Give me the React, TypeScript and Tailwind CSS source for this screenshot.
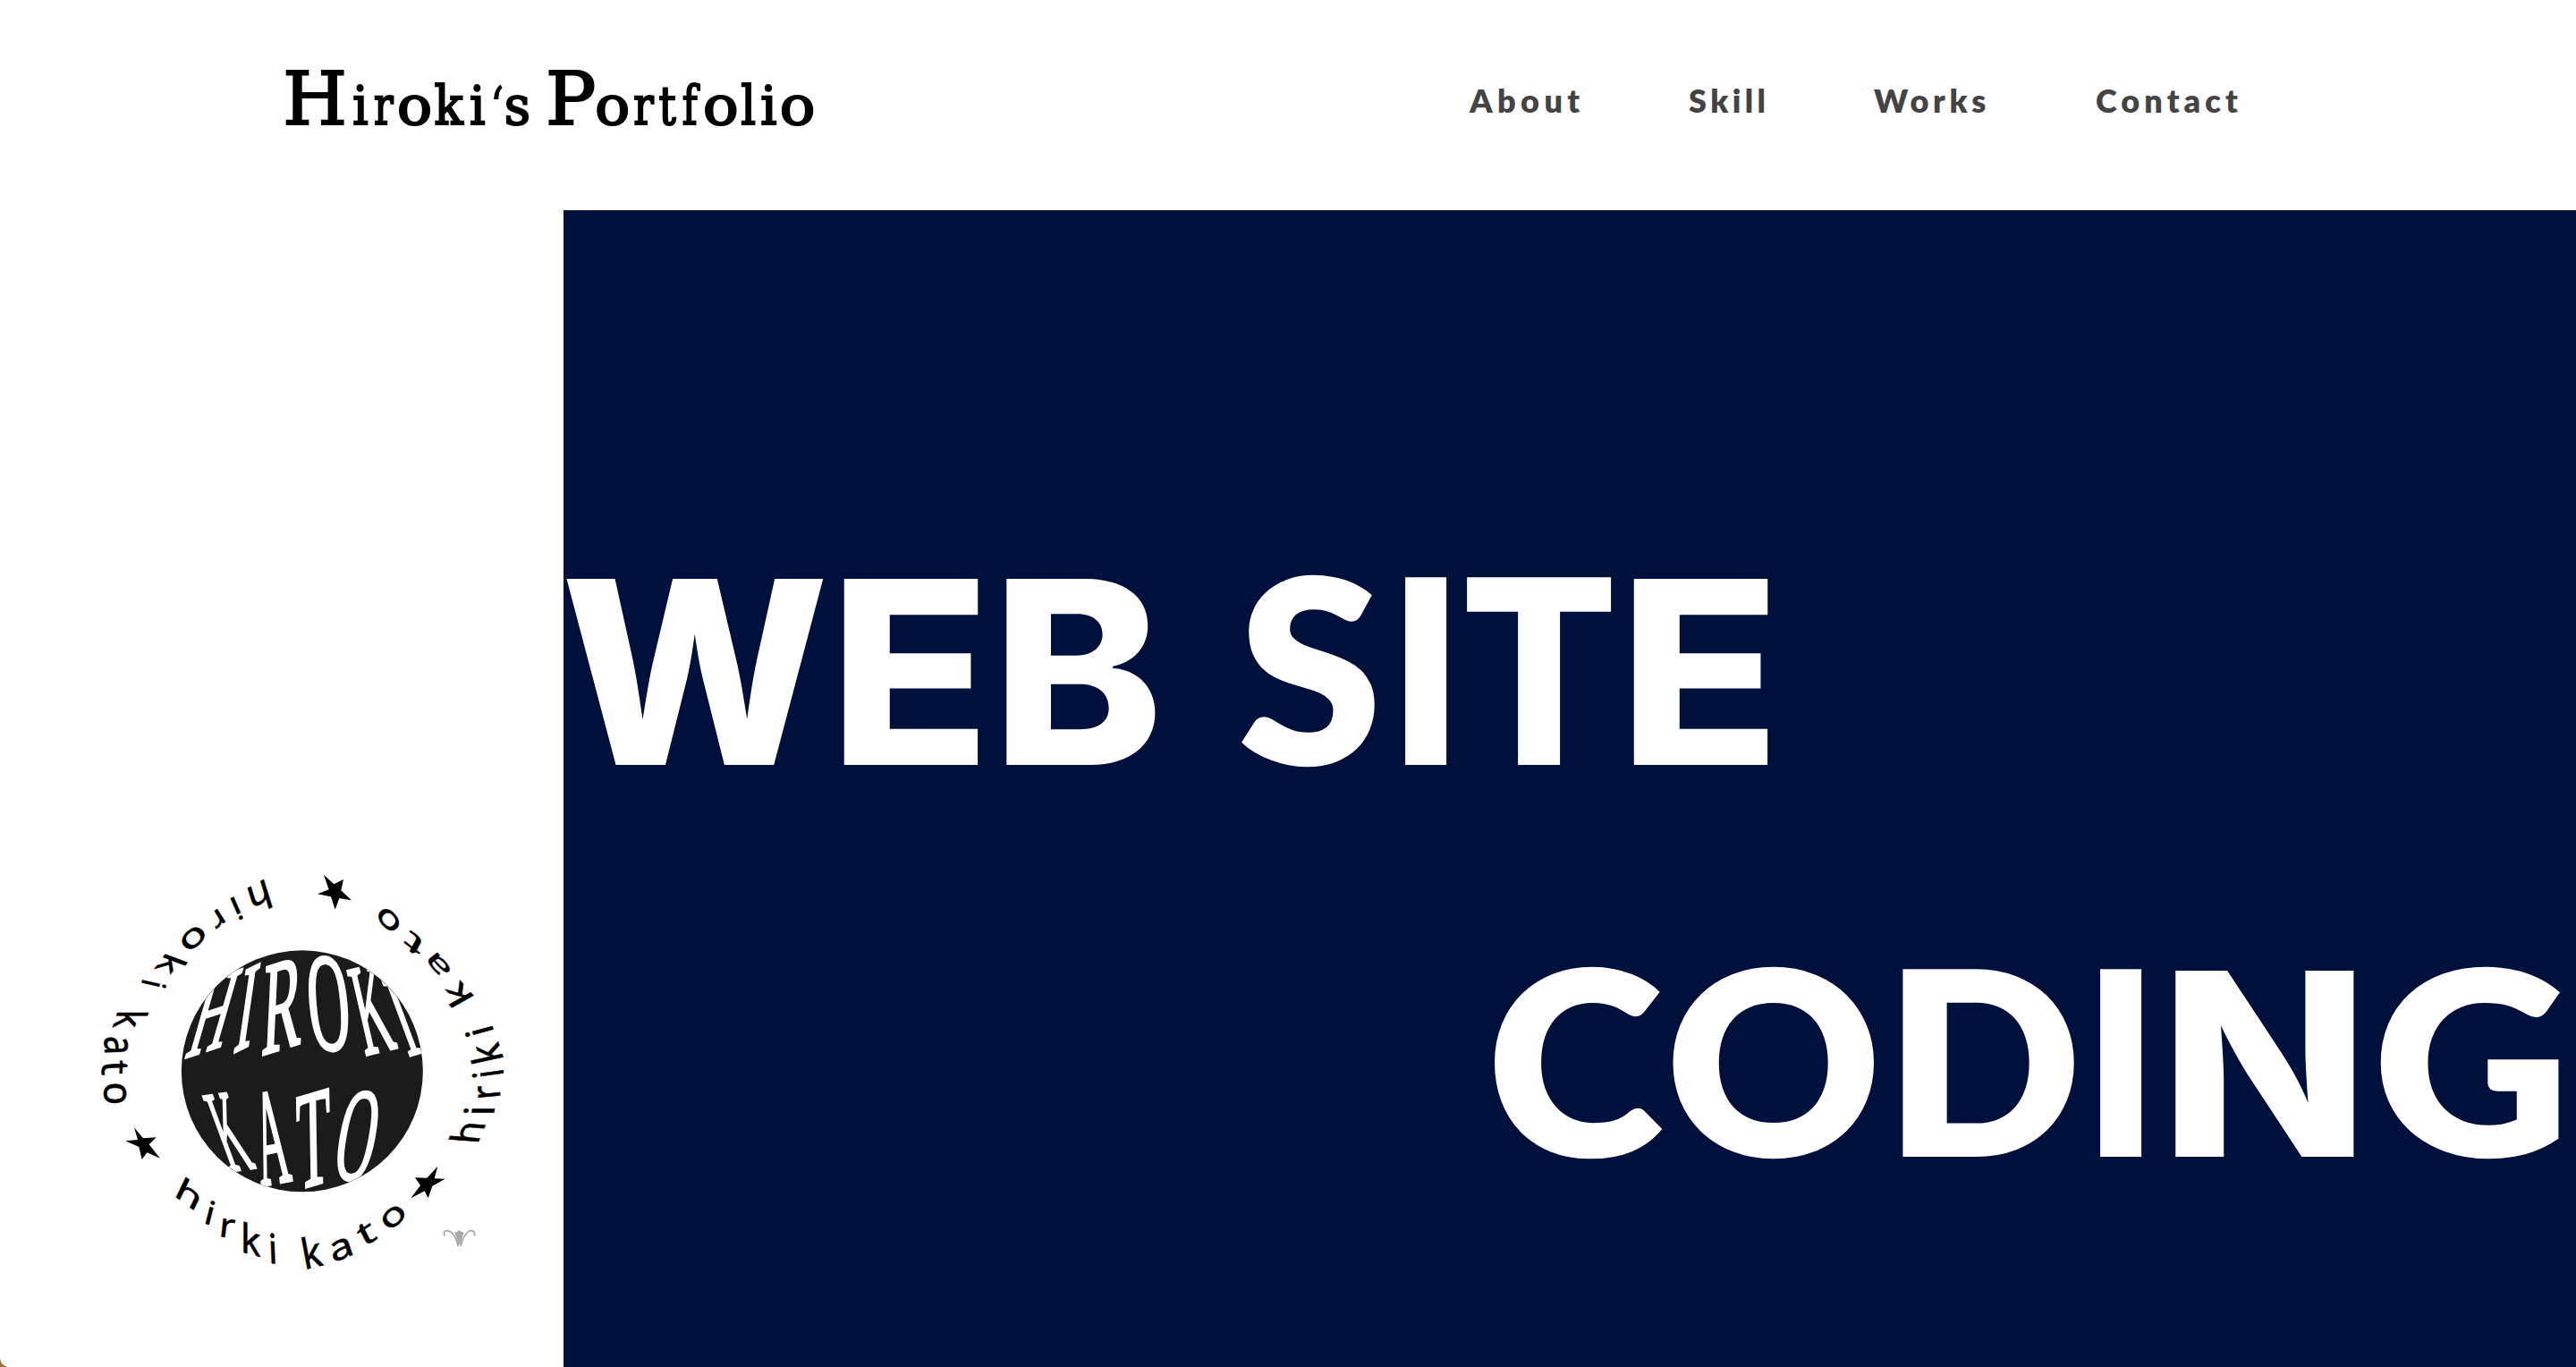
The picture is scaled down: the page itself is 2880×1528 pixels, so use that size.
import React from "react";

type Pt = [number, number];
type Box = [left: number, right: number, bottom: number, top: number];

/* Ink boxes of the letters, per 1000 units of em. */
const SANS: Record<string, Box> = {
  h: [86, 537, 0, 762],
  i: [76, 184, 0, 742],
  r: [86, 410, 0, 546],
  o: [53, 554, -12, 548],
  k: [86, 532, 0, 762],
  a: [40, 478, -12, 548],
  t: [18, 344, -12, 664],
};

const SERIF: Record<string, Box> = {
  H: [18, 703, 0, 662],
  I: [30, 308, 0, 662],
  R: [18, 660, 0, 662],
  O: [34, 688, -14, 676],
  K: [18, 720, 0, 662],
  A: [12, 708, 0, 674],
  T: [18, 594, 0, 662],
};

/* Spans a letter's ink box over three corners: bottom left, bottom right and top left. */
function spread(box: Box, bl: Pt, br: Pt, tl: Pt) {
  const w = (box[1] - box[0]) / 10;
  const h = (box[3] - box[2]) / 10;
  const a = (br[0] - bl[0]) / w;
  const b = (br[1] - bl[1]) / w;
  const c = (bl[0] - tl[0]) / h;
  const d = (bl[1] - tl[1]) / h;
  const x = box[0] / 10;
  const y = -box[2] / 10;
  return `matrix(${a} ${b} ${c} ${d} ${bl[0] - a * x - c * y} ${bl[1] - b * x - d * y})`;
}

type Letter = [string, Pt, Pt, Pt];

const RING: { at: string; letters: Letter[] }[] = [
  {
    at: "translate(30 60)",
    letters: [
      ["h", [584, 39], [531, 68], [613, 132]],
      ["i", [484, 97], [472, 103], [516, 170]],
      ["r", [428, 138], [396, 162], [456, 182]],
      ["o", [356, 187], [298, 242], [398, 229]],
      ["k", [254, 290], [217, 340], [329, 318]],
      ["i", [178, 376], [175, 386], [259, 394]],
      ["k", [94, 486], [78, 536], [198, 486]],
      ["a", [48, 569], [50, 618], [128, 567]],
      ["t", [42, 652], [40, 695], [128, 646]],
    ],
  },
  {
    at: "translate(30 780)",
    letters: [
      ["o", [46, 5], [46, 69], [124, 5]],
      ["h", [291, 385], [349, 427], [324, 317]],
      ["i", [389, 473], [402, 477], [409, 395]],
      ["r", [443, 517], [484, 524], [450, 455]],
      ["k", [518, 570], [574, 585], [518, 467]],
      ["i", [611, 607], [624, 608], [607, 505]],
    ],
  },
  {
    at: "translate(750 780)",
    letters: [
      ["k", [11, 625], [66, 612], [-9, 520]],
      ["a", [103, 604], [162, 580], [82, 542]],
      ["t", [203, 552], [247, 524], [171, 487]],
      ["o", [294, 498], [348, 446], [252, 456]],
      ["h", [585, 198], [608, 143], [485, 190]],
      ["i", [637, 101], [639, 87], [534, 101]],
      ["r", [657, 43], [657, 5], [583, 50]],
    ],
  },
  {
    at: "translate(750 60)",
    letters: [
      ["i", [668, 690], [667, 678], [563, 704]],
      ["k", [667, 634], [650, 582], [562, 657]],
      ["i", [635, 543], [631, 530], [543, 568]],
      ["k", [568, 428], [522, 376], [495, 469]],
      ["a", [495, 340], [448, 284], [457, 370]],
      ["t", [408, 248], [357, 208], [380, 300]],
      ["o", [330, 184], [278, 126], [290, 222]],
    ],
  },
];

const GLOBE: Letter[] = [
  ["H", [350, 698], [472, 658], [425, 436]],
  ["I", [515, 680], [565, 655], [555, 403]],
  ["R", [608, 688], [735, 648], [622, 392]],
  ["O", [782, 677], [908, 677], [755, 355]],
  ["K", [957, 688], [1065, 662], [892, 405]],
  ["I", [1103, 690], [1145, 678], [1010, 440]],
  ["K", [500, 1078], [590, 1065], [407, 825]],
  ["A", [608, 1127], [710, 1107], [569, 820]],
  ["T", [730, 1138], [837, 1106], [725, 831]],
  ["O", [844, 1110], [962, 1110], [898, 805]],
];

function Emblem() {
  return (
    <svg className="block h-[500px] w-[500px]" viewBox="0 0 1500 1500" aria-label="Hiroki Kato emblem">
      <defs>
        <clipPath id="globe">
          <circle cx="743.5" cy="742" r="404" />
        </clipPath>
      </defs>
      <circle cx="743.5" cy="742" r="405" fill="#1b1b1b" />
      <g clipPath="url(#globe)" fill="#fff" stroke="#fff" strokeWidth="2.4" fontSize="100" className="font-['Liberation_Serif',serif]">
        {GLOBE.map(([ch, bl, br, tl], i) => (
          <text key={i} transform={spread(SERIF[ch], bl, br, tl)}>{ch}</text>
        ))}
      </g>
      {RING.map((part, n) => (
        <g key={n} transform={part.at} fill="#000" stroke="#000" strokeWidth="1.4" fontSize="100" className="font-['Noto_Sans',sans-serif]">
          {part.letters.map(([ch, bl, br, tl], i) => (
            <text key={i} transform={spread(SANS[ch], bl, br, tl)}>{ch}</text>
          ))}
        </g>
      ))}
      <g transform="translate(750 60)">
        <polygon points="66,24 100,55 132,39 124,76 159,109 118,102 104,140 90,97 45,88 83,73" />
      </g>
      <g transform="translate(30 780)">
        <polygon points="150,151 180,187 224,184 200,208 237,254 193,235 176,258 166,216 121,196 162,192" />
      </g>
      <g transform="translate(750 780)">
        <polygon points="448,281 437,322 473,323 430,347 416,388 404,364 358,388 390,345 372,319 412,320" />
        <g fill="none" stroke="#a9a9a9" strokeWidth="5">
          <path d="M472 515 C463 498 478 494 488 499 C504 508 512 528 517 549" />
          <path d="M570 515 C578 498 562 494 552 499 C538 508 530 528 525 549" />
        </g>
        <path d="M505 502 L514 500 L520 494 L526 500 L535 502 L530 522 L526 549 L521 540 L516 549 L511 522 Z" fill="#a9a9a9" />
      </g>
    </svg>
  );
}

/* Slab letters of the title: character, font size, left and right ink edge, ink box. */
const TITLE: [string, number, number, number, number, number][] = [
  ["H", 82, 19.6, 84.5, 55, 817],
  ["i", 59, 95.1, 111, 38, 290],
  ["r", 59, 118.8, 140.8, 40, 478],
  ["o", 59, 146.5, 180.4, 57, 545],
  ["k", 59, 186, 219, 28, 606],
  ["i", 59, 226, 242, 38, 290],
  ["s", 59, 265.7, 291, 54, 459],
  ["P", 82, 313.5, 364, 55, 631],
  ["o", 59, 367.8, 401.6, 57, 545],
  ["r", 59, 409, 431.8, 40, 478],
  ["t", 59, 436.7, 456.3, 28, 392],
  ["f", 59, 463.3, 483.3, 38, 430],
  ["o", 59, 488.6, 522.9, 57, 545],
  ["l", 59, 528.6, 544.5, 28, 290],
  ["i", 59, 551.4, 568, 38, 290],
  ["o", 59, 574.3, 608.6, 57, 545],
];

function Title() {
  return (
    <svg className="block h-[100px] w-[620px]" viewBox="0 0 620 100" aria-label="Hiroki‘s Portfolio">
      <g fill="#000" stroke="#000" strokeWidth="2.2" className="font-['DejaVu_Serif',serif]">
        {TITLE.map(([ch, size, x0, x1, l, r], i) => {
          const sx = (x1 - x0 - 2.2) / (((r - l) * size) / 1000);
          return (
            <text key={i} fontSize={size} transform={`translate(${x0 + 1.1 - (l * size * sx) / 1000} 79.1) scale(${sx} 1)`}>
              {ch}
            </text>
          );
        })}
        <text fontSize="60" strokeWidth="1.5" transform="translate(246 80) scale(0.72 1) skewX(-6)">‘</text>
      </g>
    </svg>
  );
}

/* Headline letters: character, distance to the next letter's ink, left bearing (em), horizontal scale, squared cut. */
type Cell = [string, number, number, number, boolean?];

const WEB_SITE: Cell[] = [
  ["W", 315, 0.012, 0.99, true],
  ["E", 182, 0.062, 1.035, true],
  ["B", 261, 0.062, 1.007, true],
  ["S", 183, 0.014, 1.01],
  ["I", 67.8, 0.069, 0.94],
  ["T", 189.2, 0.009, 0.965],
  ["E", 148, 0.062, 1.035, true],
];

const CODING: Cell[] = [
  ["C", 200.2, 0.03, 1.045],
  ["O", 255.4, 0.03, 1.03],
  ["D", 220.6, 0.069, 1.005],
  ["I", 87, 0.069, 0.94],
  ["N", 227.7, 0.062, 1.067, true],
  ["G", 200, 0.028, 1.06],
];

function Headline({ cells, className }: { cells: Cell[]; className: string }) {
  return (
    <p className={`flex h-[289px] whitespace-pre text-[288px] leading-[289px] font-extrabold text-white ${className}`}>
      {cells.map(([ch, pitch, bearing, scale, squared], i) => (
        <span key={i} className="block shrink-0" style={{ width: pitch }}>
          <span
            className={squared ? "inline-block origin-left font-['Inter',sans-serif] text-[286px]" : "inline-block origin-left"}
            style={{ marginLeft: `${-bearing * scale}em`, transform: `scaleX(${scale})` }}
          >
            {ch}
          </span>
        </span>
      ))}
    </p>
  );
}

export default function App() {
  return (
    <div className="flex h-[1528px] w-[2880px] flex-col overflow-hidden bg-white font-['Lato',sans-serif]">
      <header className="flex h-[235px] shrink-0 items-start">
        <h1 className="mt-[60px] ml-[300px] w-[620px]">
          <Title />
        </h1>
        <nav className="mt-[94px] ml-[723px] flex text-[36px] leading-none font-extrabold text-[#444]">
          <a className="w-[245px] tracking-[5.4px]">About</a>
          <a className="w-[207px] tracking-[4.4px]">Skill</a>
          <a className="w-[248px] tracking-[4.6px]">Works</a>
          <a className="tracking-[5.1px]">Contact</a>
        </nav>
      </header>
      <main className="flex min-h-0 flex-1">
        <aside className="relative flex w-[630px] shrink-0 flex-col justify-end pb-[78px] pl-[90px]">
          <Emblem />
          <svg className="absolute bottom-0 left-0 h-[10px] w-[8px]" viewBox="0 0 8 10">
            <path d="M0 0 Q1 8 8 10 L0 10 Z" fill="#a4703f" />
          </svg>
        </aside>
        <section className="flex min-w-0 flex-1 flex-col bg-[#00103d] pt-[364px]">
          <Headline cells={WEB_SITE} className="" />
          <Headline cells={CODING} className="mt-[149px] ml-[1041px]" />
        </section>
      </main>
    </div>
  );
}
